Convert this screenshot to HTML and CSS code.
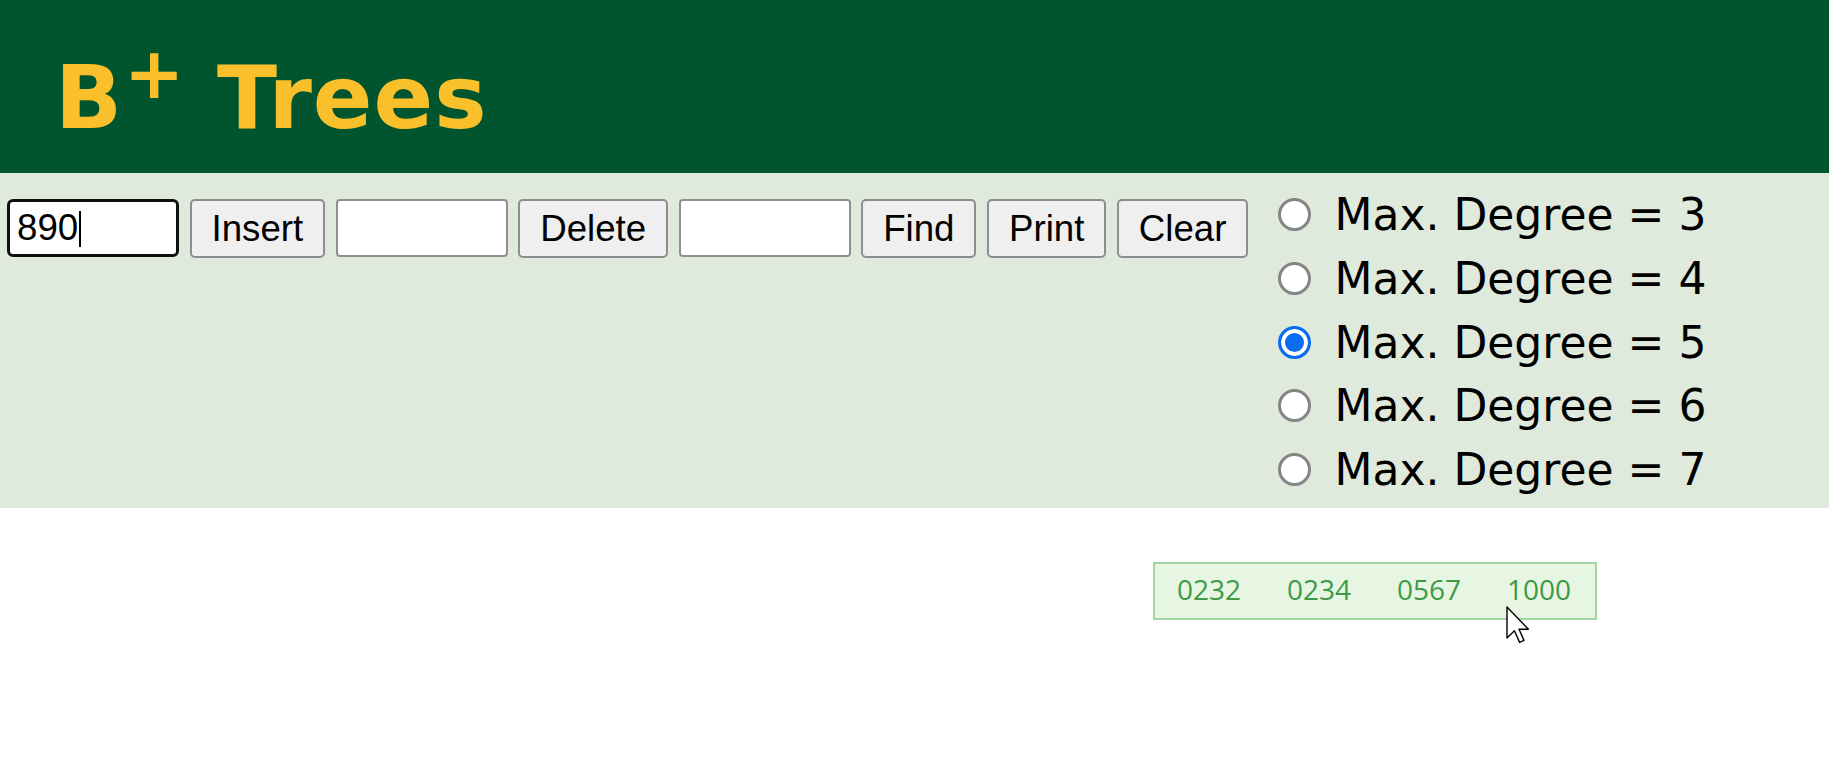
FILE: index.html
```html
<!DOCTYPE html>
<html lang="en">
<head>
    <meta charset="UTF-8">
    <meta name="viewport" content="width=device-width, initial-scale=1.0">
    <title>B+ Trees</title>
    <link rel="stylesheet" href="styles.css">
</head>
<body>
    <header class="page-header">
        <h1>B<sup>+</sup> Trees</h1>
    </header>

    <!-- Controls -->
    <div class="toolbar">
        <div class="controls">
            <span class="field-wrap">
                <input type="text" class="field focused" value="890">
                <span class="caret"></span>
            </span>
            <button>Insert</button>
            <input type="text" class="field">
            <button>Delete</button>
            <input type="text" class="field">
            <button>Find</button>
            <button>Print</button>
            <button>Clear</button>
        </div>

        <div class="degrees">
            <label class="degree"><input type="radio" name="degree" value="3"><span>Max. Degree = 3</span></label>
            <label class="degree"><input type="radio" name="degree" value="4"><span>Max. Degree = 4</span></label>
            <label class="degree"><input type="radio" name="degree" value="5" checked><span>Max. Degree = 5</span></label>
            <label class="degree"><input type="radio" name="degree" value="6"><span>Max. Degree = 6</span></label>
            <label class="degree"><input type="radio" name="degree" value="7"><span>Max. Degree = 7</span></label>
        </div>
    </div>

    <!-- Tree canvas -->
    <div class="tree">
        <div class="node">
            <span>0232</span>
            <span>0234</span>
            <span>0567</span>
            <span>1000</span>
        </div>
        <svg class="cursor" width="24" height="38" viewBox="0 0 12 19">
            <path d="M0.5 0.5 L0.5 16 L4.2 12.4 L6.8 18.2 L9 17.2 L6.5 11.6 L11.2 11.6 Z" fill="#fff" stroke="#000" stroke-width="0.7" stroke-linejoin="round"/>
        </svg>
    </div>
</body>
</html>
```

FILE: styles.css
```css
/* General */
body {
    margin: 0;
    font-family: 'Liberation Sans', Arial, sans-serif;
    background: #fff;
}

/* Header */
.page-header {
    background: #00552f;
    height: 173px;
    box-sizing: border-box;
    padding: 54px 0 0 55px;
}

.page-header h1 {
    margin: 0;
    font: bold 88px/87px 'DejaVu Sans', Verdana, sans-serif;
    letter-spacing: 1px;
    color: #f9c02c;
}

.page-header sup {
    font-size: 72px;
    line-height: 0;
    vertical-align: super;
    margin-left: 1px;
}

/* Toolbar */
.toolbar {
    background: #dfe9dc;
    display: flex;
    align-items: flex-start;
    padding: 10px 0 7px 7px;
}

.controls {
    display: flex;
    gap: 10.5px;
    margin-top: 16px;
}

.field-wrap {
    position: relative;
    display: flex;
}

.field {
    width: 172px;
    height: 58px;
    box-sizing: border-box;
    border: 2px solid #8f8f8f;
    border-radius: 4px;
    background: #fff;
    padding: 0 8px;
    font: 36.67px 'Liberation Sans', Arial, sans-serif;
    color: #000;
    outline: none;
}

.field.focused {
    border: 3px solid #111;
    border-radius: 6px;
    padding-left: 7px;
}

.caret {
    position: absolute;
    left: 72px;
    top: 12px;
    width: 2px;
    height: 36px;
    background: #000;
}

button {
    height: 59px;
    box-sizing: border-box;
    padding: 0 20px;
    border: 2px solid #8d8d8d;
    border-radius: 5px;
    background: #efefef;
    font: 36.67px 'Liberation Sans', Arial, sans-serif;
    color: #000;
}

/* Degree selector */
.degrees {
    margin-left: 30px;
}

.degree {
    display: flex;
    align-items: center;
    height: 63.7px;
    font: 44px 'DejaVu Sans', Verdana, sans-serif;
    color: #000;
}

.degree input {
    appearance: none;
    width: 33px;
    height: 33px;
    margin: 0 23px 0 0;
    box-sizing: border-box;
    border: 3px solid #858585;
    border-radius: 50%;
    background: #fff;
}

.degree input:checked {
    border-color: #0a6cf0;
    background: #0a6cf0;
    box-shadow: inset 0 0 0 4px #fff;
}

/* Tree */
.tree {
    position: relative;
    height: 266px;
}

.node {
    position: absolute;
    left: 1153px;
    top: 54px;
    width: 444px;
    height: 58px;
    box-sizing: border-box;
    border: 2px solid #a3d5a3;
    background: #e7f6e3;
    display: flex;
    align-items: center;
    padding: 0 0 5px 22px;
}

.node span {
    flex: none;
    width: 110px;
    font: 28px 'Open Sans', sans-serif;
    color: #3c9a48;
}

.node span:last-child {
    width: auto;
}

.cursor {
    position: absolute;
    left: 1506px;
    top: 98px;
}
```
